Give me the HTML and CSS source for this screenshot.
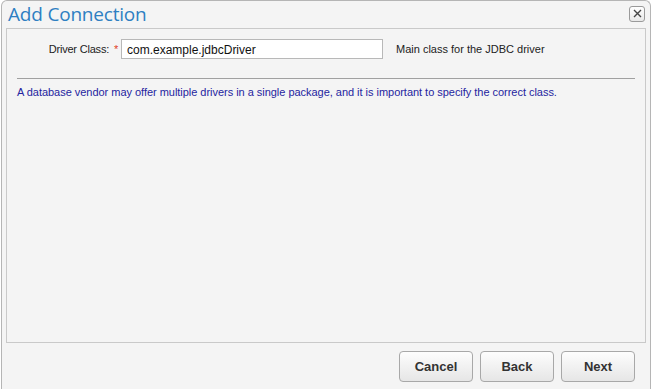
FILE: index.html
```html
<!DOCTYPE html>
<html lang="en">
<head>
    <meta charset="UTF-8">
    <meta name="viewport" content="width=device-width, initial-scale=1.0">
    <title>Add Connection</title>
    <link rel="stylesheet" href="styles.css">
</head>
<body>
    <div class="dialog">
        <div class="dialog-header">
            <span class="dialog-title">Add Connection</span>
            <button class="close-btn" title="Close">
                <svg width="9" height="9" viewBox="0 0 9 9">
                    <path d="M1 1 L8 8 M8 1 L1 8" stroke="#444" stroke-width="1.4" fill="none"/>
                </svg>
            </button>
        </div>
        <div class="panel">
            <div class="field-row">
                <label class="field-label" for="driver">Driver Class: <span class="required">*</span></label>
                <input class="field-input" id="driver" type="text" value="com.example.jdbcDriver">
                <span class="field-hint">Main class for the JDBC driver</span>
            </div>
            <hr class="divider">
            <p class="note">A database vendor may offer multiple drivers in a single package, and it is important to specify the correct class.</p>
        </div>
        <div class="dialog-footer">
            <button class="btn">Cancel</button>
            <button class="btn">Back</button>
            <button class="btn">Next</button>
        </div>
    </div>
</body>
</html>
```

FILE: styles.css
```css
body {
    margin: 0;
    background-color: #fff;
    font-family: "Liberation Sans", Arial, sans-serif;
    height: 389px;
    overflow: hidden;
}
.dialog {
    margin: 0 1px 0 1px;
    height: 390px;
    border: 1px solid #b5b5b5;
    border-bottom: none;
    border-radius: 6px 6px 0 0;
    background-color: #f4f4f4;
    display: flex;
    flex-direction: column;
    box-sizing: border-box;
}
.dialog-header {
    height: 27px;
    display: flex;
    align-items: center;
    justify-content: space-between;
    padding: 0 5px 0 6px;
}
.dialog-title {
    font-family: "Open Sans", sans-serif;
    font-size: 19px;
    color: #2e7fc2;
    letter-spacing: -0.2px;
    margin-top: -2px;
}
.close-btn {
    width: 16px;
    height: 16px;
    padding: 0;
    border: 1px solid #9a9a9a;
    border-radius: 3px;
    background: linear-gradient(#fff, #e8e8e8);
    display: flex;
    align-items: center;
    justify-content: center;
    margin-top: -2px;
}
.panel {
    flex: 1;
    margin: 0 4px 0 4px;
    border: 1px solid #c9c9c9;
    padding: 10px 10px 0 10px;
}
.field-row {
    display: flex;
    align-items: center;
    font-size: 11px;
    color: #222;
}
.field-label {
    width: 101px;
    text-align: right;
    margin-right: 3px;
    letter-spacing: -0.2px;
}
.required {
    color: #e03c1e;
    margin-left: 2px;
}
.field-input {
    width: 262px;
    height: 20px;
    box-sizing: border-box;
    border: 1px solid #b8b8b8;
    padding: 1px 5px 0 5px;
    font-family: "Liberation Sans", Arial, sans-serif;
    font-size: 12px;
    color: #111;
    background: #fff;
}
.field-hint {
    margin-left: 13px;
}
.divider {
    border: none;
    border-top: 1px solid #a0a0a0;
    margin: 19px 0 0 0;
}
.note {
    margin: 7px 0 0 0;
    font-size: 11px;
    letter-spacing: -0.03px;
    color: #2424a0;
}
.dialog-footer {
    height: 47px;
    display: flex;
    justify-content: flex-end;
    align-items: center;
    gap: 7px;
    padding: 0 15px 0 0;
}
.btn {
    width: 74px;
    height: 31px;
    border: 1px solid #a8a8a8;
    border-radius: 4px;
    background: linear-gradient(#fdfdfd, #e6e6e6);
    font-family: "Liberation Sans", Arial, sans-serif;
    font-weight: bold;
    font-size: 13px;
    color: #333;
    cursor: pointer;
}
```
